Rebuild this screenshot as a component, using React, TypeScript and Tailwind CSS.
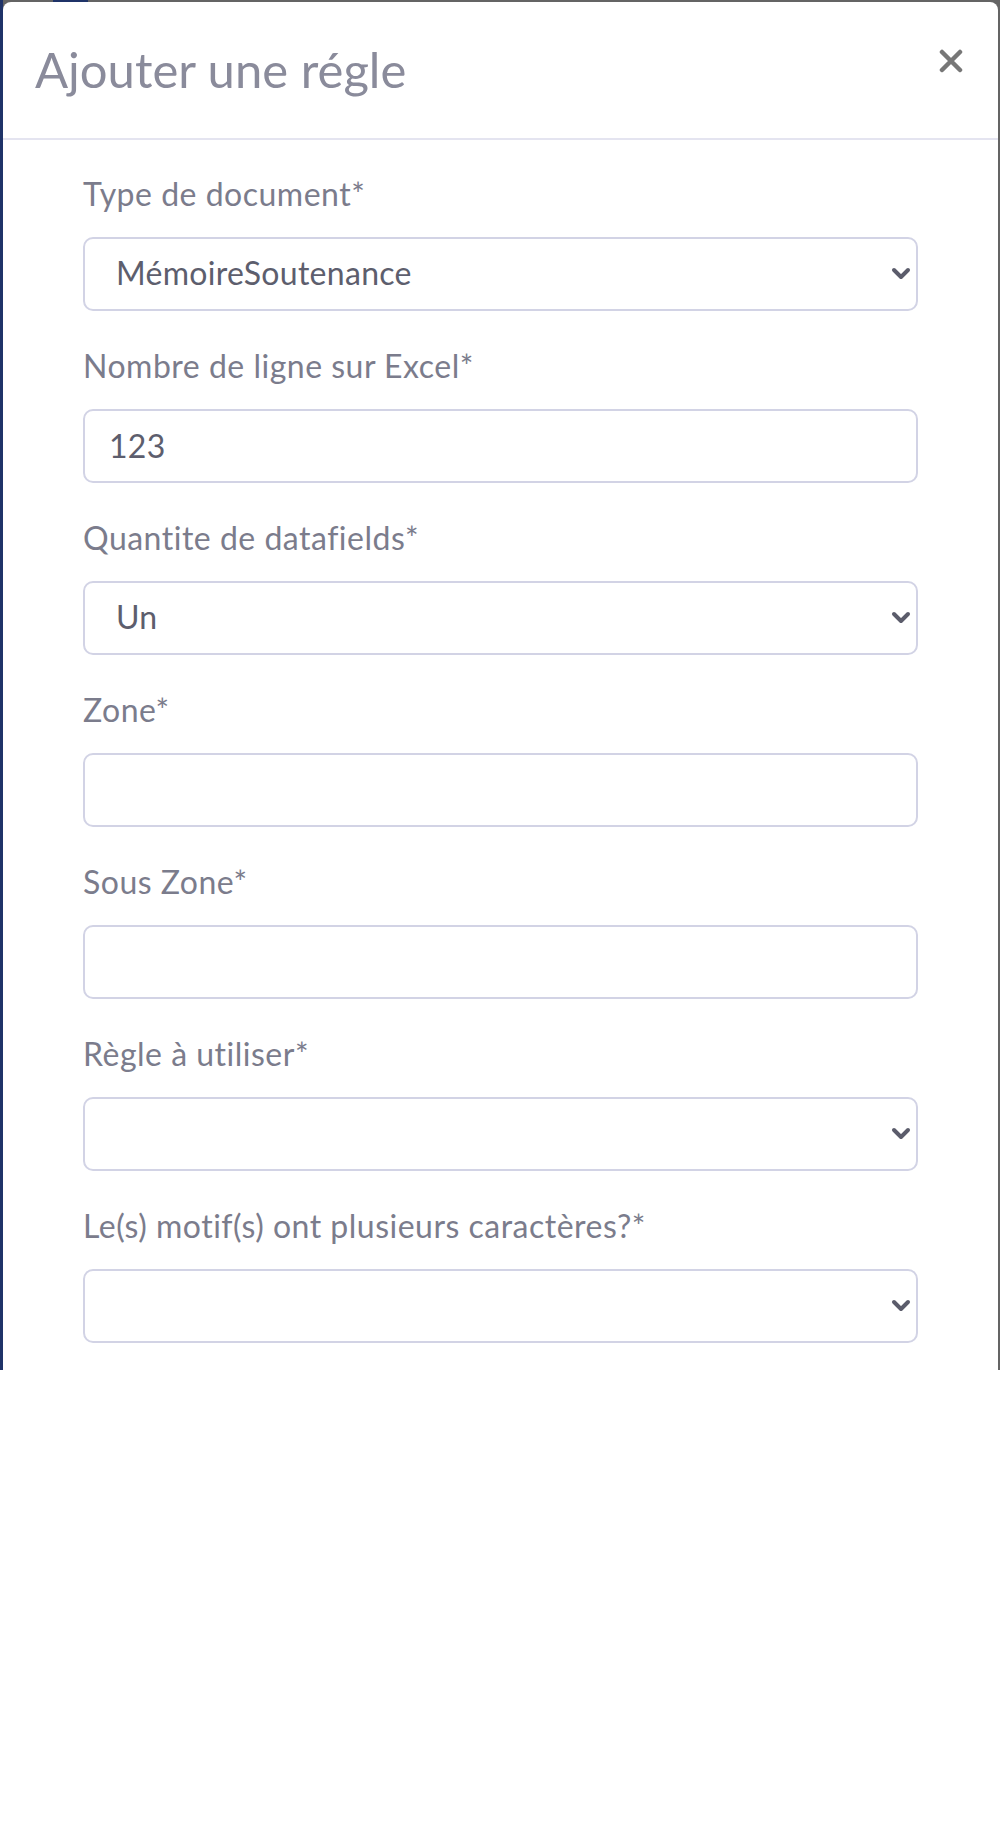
import { useState } from "react";

const fields = [
  { label: "Type de document*", type: "select", value: "MémoireSoutenance" },
  { label: "Nombre de ligne sur Excel*", type: "input", value: "123" },
  { label: "Quantite de datafields*", type: "select", value: "Un" },
  { label: "Zone*", type: "input", value: "" },
  { label: "Sous Zone*", type: "input", value: "" },
  { label: "Règle à utiliser*", type: "select", value: "" },
  { label: "Le(s) motif(s) ont plusieurs caractères?*", type: "select", value: "" },
];

const Chevron = () => (
  <svg
    className="absolute right-[7px] top-1/2 -translate-y-1/2 pointer-events-none"
    width="20"
    height="14"
    viewBox="0 0 20 14"
    fill="none"
  >
    <path d="M3 3l7 7 7-7" stroke="#5b5c6b" strokeWidth="4" strokeLinecap="round" strokeLinejoin="round" />
  </svg>
);

const Field = ({ label, type, value }: { label: string; type: string; value: string }) => {
  const [val, setVal] = useState(value);
  return (
    <div className="mb-[33px]">
      <label className="block text-[32px] leading-[44px] tracking-[0.5px] text-[#7b7c8c] mb-[21px]">{label}</label>
      {type === "select" ? (
        <div className="relative">
          <select
            value={val}
            onChange={(e) => setVal(e.target.value)}
            className="appearance-none w-full h-[74px] border-2 border-[#d2d3e5] rounded-[10px] bg-white pl-[31px] pr-12 pb-[2px] text-[32px] tracking-[0.3px] text-[#5d5e6d] outline-none"
          >
            <option value={value}>{value}</option>
          </select>
          <Chevron />
        </div>
      ) : (
        <input
          value={val}
          onChange={(e) => setVal(e.target.value)}
          className="w-full h-[74px] border-2 border-[#d2d3e5] rounded-[10px] bg-white px-[24px] pb-[2px] text-[32px] tracking-[0.3px] text-[#5d5e6d] outline-none"
        />
      )}
    </div>
  );
};

const App = () => {
  return (
    <div className="w-[1000px] min-h-[1834px] bg-white font-['Lato',sans-serif] [font-variant-ligatures:none]">
      {/* backdrop edges around the modal */}
      <div className="relative h-[1370px] bg-[#646464] border-l-[3px] border-[#1f3368] pt-[2px] pr-[2px] overflow-hidden">
        <span className="absolute top-0 left-[50px] w-[35px] h-[2px] bg-[#1f3368]" />
        <div className="h-full bg-white rounded-t-[8px]">
          {/* modal header */}
          <div className="h-[138px] border-b-2 border-[#e4e4f0] flex items-start justify-between pl-[32px] pr-[35px] pt-[37px]">
            <h2 className="text-[49px] leading-[60px] text-[#8a8b9b]">Ajouter une régle</h2>
            <button className="mt-[10px] w-[24px] h-[24px] flex items-center justify-center">
              <svg width="24" height="24" viewBox="0 0 24 24">
                <path d="M3 3l18 18M21 3L3 21" stroke="#777777" strokeWidth="4.5" strokeLinecap="round" />
              </svg>
            </button>
          </div>

          {/* form */}
          <form className="px-[80px] pt-[32px]">
            {fields.map((f) => (
              <Field key={f.label} label={f.label} type={f.type} value={f.value} />
            ))}
          </form>
        </div>
      </div>
    </div>
  );
};

export default App;
